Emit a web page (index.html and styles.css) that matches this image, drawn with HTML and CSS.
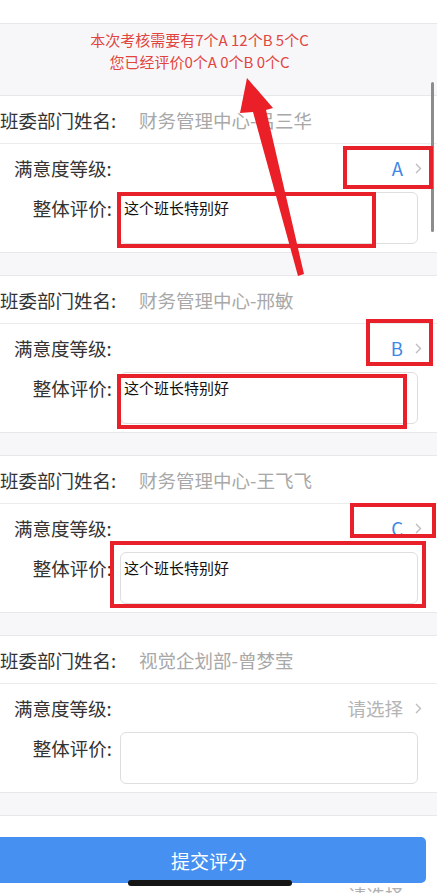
FILE: index.html
```html
<!DOCTYPE html>
<html lang="zh-CN">
<head>
  <meta charset="UTF-8" />
  <title>班委满意度评价</title>
  <link rel="stylesheet" href="styles.css">
</head>
<body>

  <div class="page">
    <div class="topbar"></div>

    <div class="notice">
      <p>本次考核需要有7个A 12个B 5个C</p>
      <p>您已经评价0个A 0个B 0个C</p>
    </div>

    <section class="card">
      <div class="name-row">
        <span class="name-label">班委部门姓名:</span>
        <span class="name-value">财务管理中心-吕三华</span>
      </div>
      <div class="grade-row">
        <span class="grade-label">满意度等级:</span>
        <span class="grade-value">A</span>
        <svg class="chevron" width="7" height="11" viewBox="0 0 7 11"><polyline points="1,1 5.5,5.5 1,10" /></svg>
      </div>
      <div class="eval-row">
        <span class="eval-label">整体评价:</span>
        <textarea class="eval-input">这个班长特别好</textarea>
      </div>
    </section>

    <section class="card">
      <div class="name-row">
        <span class="name-label">班委部门姓名:</span>
        <span class="name-value">财务管理中心-邢敏</span>
      </div>
      <div class="grade-row">
        <span class="grade-label">满意度等级:</span>
        <span class="grade-value">B</span>
        <svg class="chevron" width="7" height="11" viewBox="0 0 7 11"><polyline points="1,1 5.5,5.5 1,10" /></svg>
      </div>
      <div class="eval-row">
        <span class="eval-label">整体评价:</span>
        <textarea class="eval-input">这个班长特别好</textarea>
      </div>
    </section>

    <section class="card">
      <div class="name-row">
        <span class="name-label">班委部门姓名:</span>
        <span class="name-value">财务管理中心-王飞飞</span>
      </div>
      <div class="grade-row">
        <span class="grade-label">满意度等级:</span>
        <span class="grade-value">C</span>
        <svg class="chevron" width="7" height="11" viewBox="0 0 7 11"><polyline points="1,1 5.5,5.5 1,10" /></svg>
      </div>
      <div class="eval-row">
        <span class="eval-label">整体评价:</span>
        <textarea class="eval-input">这个班长特别好</textarea>
      </div>
    </section>

    <section class="card">
      <div class="name-row">
        <span class="name-label">班委部门姓名:</span>
        <span class="name-value">视觉企划部-曾梦莹</span>
      </div>
      <div class="grade-row">
        <span class="grade-label">满意度等级:</span>
        <span class="grade-value placeholder">请选择</span>
        <svg class="chevron" width="7" height="11" viewBox="0 0 7 11"><polyline points="1,1 5.5,5.5 1,10" /></svg>
      </div>
      <div class="eval-row">
        <span class="eval-label">整体评价:</span>
        <textarea class="eval-input"></textarea>
      </div>
    </section>

    <div class="footer">
      <button class="submit">提交评分</button>
    </div>

    <div class="ghost-picker">请选择</div>
    <div class="home-bar"></div>
    <div class="scrollbar"></div>

    <!-- red markup drawn on top of the screenshot -->
    <div class="mark mark-a1"></div>
    <div class="mark mark-t1"></div>
    <div class="mark mark-a2"></div>
    <div class="mark mark-t2"></div>
    <div class="mark mark-a3"></div>
    <div class="mark mark-t3"></div>
    <svg class="arrow" width="447" height="300" viewBox="0 0 447 300">
      <polygon points="247,78 273,108 266,110 304,274 298,276 253,112 240,113" />
    </svg>
  </div>

</body>
</html>
```

FILE: styles.css
```css
html, body {
  margin: 0;
  padding: 0;
  background: white;
  overflow: hidden;
  font-family: "Noto Sans CJK SC", "Noto Sans", sans-serif;
}

.page {
  position: relative;
  width: 437px;
  height: 893px;
  background: #f7f7fa;
  overflow: hidden;
}

.topbar {
  height: 23px;
  background: white;
  border-bottom: 1px solid #e8e8ec;
}

.notice {
  height: 71px;
  box-sizing: border-box;
  padding: 5px 38px 0 0;
  text-align: center;
  color: #e2453e;
  font-size: 15px;
  line-height: 22px;
}

.notice p {
  margin: 0;
}

.card {
  background: white;
  border-top: 1px solid #e8e8ec;
  border-bottom: 1px solid #e8e8ec;
  margin-bottom: 22px;
  color: #333;
  font-size: 18.5px;
}

.name-row {
  height: 47px;
  display: flex;
  align-items: center;
  border-bottom: 1px solid #ececef;
}

.name-label {
  width: 139px;
  flex-shrink: 0;
}

.name-value {
  color: #a8a8a8;
}

.grade-row {
  height: 48px;
  display: flex;
  align-items: center;
  padding: 0 15px 0 14px;
}

.grade-value {
  margin-left: auto;
  color: #3f87e6;
}

.grade-value.placeholder {
  color: #b4b4b4;
}

.chevron {
  margin-left: 12px;
  fill: none;
  stroke: #bdbdbd;
  stroke-width: 1.4;
}

.eval-row {
  display: flex;
  align-items: flex-start;
  padding: 0 0 8px 14px;
}

.eval-label {
  width: 98px;
  text-align: right;
  line-height: 26px;
  margin-top: 3px;
}

.eval-input {
  margin: 0 0 0 8px;
  width: 298px;
  height: 52px;
  box-sizing: border-box;
  padding: 5px 3px;
  border: 1px solid #dedede;
  border-radius: 6px;
  resize: none;
  font-family: "Noto Sans CJK SC", sans-serif;
  font-size: 15px;
  line-height: 20px;
  color: #111;
  background: white;
  outline: none;
}

.footer {
  background: white;
  border-top: 1px solid #e8e8ec;
  height: 100px;
  padding-top: 21px;
  box-sizing: border-box;
}

.submit {
  display: block;
  width: 426px;
  height: 46px;
  border: none;
  border-radius: 0 5px 5px 0;
  background: #4590f0;
  color: white;
  font-family: "Noto Sans CJK SC", sans-serif;
  font-size: 19px;
  padding: 0 8px 0 0;
}

.ghost-picker {
  position: absolute;
  left: 348px;
  top: 883px;
  font-size: 18.5px;
  line-height: 24px;
  color: #b0b0b0;
}

.home-bar {
  position: absolute;
  left: 128px;
  top: 880px;
  width: 164px;
  height: 6px;
  border-radius: 3px;
  background: #151515;
}

.scrollbar {
  position: absolute;
  left: 431px;
  top: 82px;
  width: 3px;
  height: 150px;
  border-radius: 2px;
  background: #8c8c8c;
}

.mark {
  position: absolute;
  box-sizing: border-box;
  border: 4px solid #e8202a;
}

.mark-a1 { left: 343px; top: 146px; width: 90px; height: 43px; }
.mark-t1 { left: 117px; top: 192px; width: 259px; height: 56px; }
.mark-a2 { left: 366px; top: 319px; width: 67px; height: 47px; }
.mark-t2 { left: 117px; top: 374px; width: 290px; height: 55px; }
.mark-a3 { left: 350px; top: 503px; width: 86px; height: 35px; }
.mark-t3 { left: 110px; top: 541px; width: 316px; height: 67px; }

.arrow {
  position: absolute;
  left: 0;
  top: 0;
  fill: #ea1f28;
}
```
